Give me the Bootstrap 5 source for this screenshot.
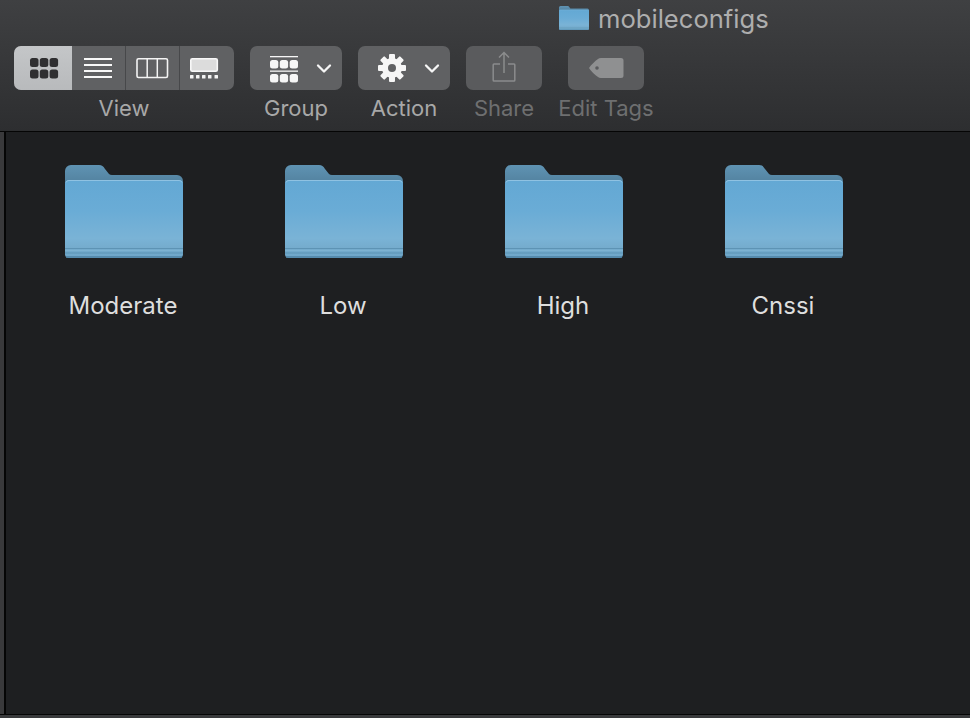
<!DOCTYPE html>
<html lang="en">
<head>
<meta charset="utf-8">
<title>mobileconfigs</title>
<link href="https://cdn.jsdelivr.net/npm/bootstrap@5.3.0/dist/css/bootstrap.min.css" rel="stylesheet">
<style>
html,body{margin:0;height:718px;overflow:hidden;background:#1e1f21;font-family:Inter,"Liberation Sans",sans-serif}
.finder-win{width:970px;height:718px}
.top-bar{height:132px;background:linear-gradient(#3f4042,#2d2e30);border-bottom:1px solid #050505;flex:none}
.title-line{height:46px;padding-left:559px;color:#aeaeae;font-size:25.6px;line-height:38px;gap:9px}
.title-ico{margin-top:6px;flex:none}
.tool-row{padding-left:14px}
.tool-item{flex:none;text-align:center;font-size:22px;line-height:26px;color:#a8a8a8;white-space:nowrap}
.tool-item.off{color:#6e6f70}
.tool-face{height:44px;background:#606163;border-radius:7px;margin:0 auto 5px;display:flex;overflow:hidden}
.off .tool-face{background:#5a5b5d}
.w-view{width:220px;margin-right:16px}
.w-drop{width:92px;margin-right:16px}
.w-share{width:76px;margin-right:26px}
.w-tags{width:76px}
.w-tags .tag-label{margin-left:-10px;margin-right:-10px;display:block}
.seg{display:block;flex:none;border-left:1px solid #47484a}
.seg-a{width:58px;border-left:0;background:linear-gradient(#c4c6c8,#b8babc)}
.seg-b{width:53px;border-left:0}
.seg-c{width:54px}
.seg-d{width:55px}
.body-wrap{flex:1 1 auto;min-height:0}
.edge{width:4px;background:#39393b;flex:none}
.edge-line{width:2px;background:#050505;flex:none}
.files{padding:33px 0 0 7px;flex:1 1 auto}
.file-cell{width:220px;flex:none;text-align:center;color:#dedede;font-size:24px;line-height:28px}
.file-cell svg{display:block;margin:0 auto 34px;transform:translateX(1px)}
.foot-line{height:4px;background:#3a3b3d;flex:none;border-top:1px solid #050505}
</style>
</head>
<body>
<svg width="0" height="0" class="d-block" aria-hidden="true">
  <defs>
    <linearGradient id="fb" x1="0" y1="0" x2="0" y2="1"><stop offset="0" stop-color="#5f93b3"/><stop offset="1" stop-color="#4d7a96"/></linearGradient>
    <linearGradient id="ff" x1="0" y1="0" x2="0" y2="1"><stop offset="0" stop-color="#63a8d4"/><stop offset=".4" stop-color="#6aacd6"/><stop offset=".75" stop-color="#7ab3d6"/><stop offset=".88" stop-color="#74abcc"/><stop offset="1" stop-color="#6ea6c9"/></linearGradient>
    <symbol id="folder" viewBox="0 0 118 93">
      <path d="M0 6a6 6 0 0 1 6-6h28c3 0 4 1 6 4l4 5q1 1 3 1h65a6 6 0 0 1 6 6v10H0z" fill="url(#fb)"/>
      <path d="M0 19a4 4 0 0 1 4-4h110a4 4 0 0 1 4 4v70a4 4 0 0 1-4 4H4a4 4 0 0 1-4-4z" fill="url(#ff)"/>
      <path d="M1 17.500a3 3 0 0 1 3-2h110a3 3 0 0 1 3 2" fill="none" stroke="#8fc2e2" stroke-width="1"/>
      <path d="M0 83.500h118M0 88h118" stroke="#5d93b4" stroke-width="1"/>
      <path d="M0 85.500h118" stroke="#82b6d4" stroke-width="1" opacity=".7"/>
      <path d="M1 92h116" stroke="#4f84a5" stroke-width="2" opacity=".8"/>
    </symbol>
  </defs>
</svg>
<div class="finder-win d-flex flex-column">
  <div class="top-bar">
    <div class="title-line d-flex align-items-start">
      <svg width="30" height="24" viewBox="0 0 118 93" class="title-ico" preserveAspectRatio="none"><use href="#folder"/></svg>
      <span>mobileconfigs</span>
    </div>
    <div class="tool-row d-flex align-items-start">
      <div class="tool-item w-view">
        <div class="tool-face">
          <svg class="seg seg-a" height="44" viewBox="14 46 58 44"><g fill="#2f2f31"><rect x="30" y="58" width="8.500" height="9" rx="2.500"/><rect x="39.800" y="58" width="8.500" height="9" rx="2.500"/><rect x="49.600" y="58" width="8.500" height="9" rx="2.500"/><rect x="30" y="69.500" width="8.500" height="9" rx="2.500"/><rect x="39.800" y="69.500" width="8.500" height="9" rx="2.500"/><rect x="49.600" y="69.500" width="8.500" height="9" rx="2.500"/></g></svg>
          <svg class="seg seg-b" height="44" viewBox="72 46 53 44"><path d="M84 59h28M84 65h28M84 71h28M84 77h28" stroke="#f8f8f8" stroke-width="2" fill="none"/></svg>
          <svg class="seg seg-c" height="44" viewBox="126 46 53 44"><rect x="137" y="58.800" width="30.500" height="18.700" rx="1.500" fill="none" stroke="#f4f4f4" stroke-width="1.600"/><path d="M147.200 59v18M157.300 59v18" stroke="#f4f4f4" stroke-width="1.500"/></svg>
          <svg class="seg seg-d" height="44" viewBox="180 46 54 44"><rect x="190.800" y="58.800" width="26.500" height="12.500" rx="1.500" fill="#dcdcdc" stroke="#f8f8f8" stroke-width="1.600"/><g fill="#f4f4f4"><rect x="190" y="75" width="3.500" height="3.500" rx=".6"/><rect x="196" y="75" width="3.500" height="3.500" rx=".6"/><rect x="202" y="75" width="3.500" height="3.500" rx=".6"/><rect x="208" y="75" width="3.500" height="3.500" rx=".6"/><rect x="214.500" y="75" width="3.500" height="3.500" rx=".6"/></g></svg>
        </div>
        View
      </div>
      <div class="tool-item w-drop">
        <div class="tool-face">
          <svg width="92" height="44" viewBox="250 46 92 44"><g fill="#f6f6f6"><rect x="270" y="56" width="28" height="1.300"/><rect x="270" y="70.500" width="28" height="1.300"/><rect x="270" y="60" width="8.300" height="8.500" rx="2.500"/><rect x="279.800" y="60" width="8.300" height="8.500" rx="2.500"/><rect x="289.700" y="60" width="8.300" height="8.500" rx="2.500"/><rect x="270" y="74" width="8.300" height="8.500" rx="2.500"/><rect x="279.800" y="74" width="8.300" height="8.500" rx="2.500"/><rect x="289.700" y="74" width="8.300" height="8.500" rx="2.500"/></g><path d="M318 65.500l6 6 6-6" fill="none" stroke="#f6f6f6" stroke-width="2.300" stroke-linecap="round" stroke-linejoin="round"/></svg>
        </div>
        Group
      </div>
      <div class="tool-item w-drop">
        <div class="tool-face">
          <svg width="92" height="44" viewBox="358 46 92 44"><g fill="#f6f6f6"><rect x="389" y="54" width="6" height="28" rx="1"/><rect x="389" y="54" width="6" height="28" rx="1" transform="rotate(45 392 68)"/><rect x="389" y="54" width="6" height="28" rx="1" transform="rotate(90 392 68)"/><rect x="389" y="54" width="6" height="28" rx="1" transform="rotate(135 392 68)"/><circle cx="392" cy="68" r="10"/></g><circle cx="392" cy="68" r="4" fill="#606163"/><path d="M426 65.500l6 6 6-6" fill="none" stroke="#f6f6f6" stroke-width="2.300" stroke-linecap="round" stroke-linejoin="round"/></svg>
        </div>
        Action
      </div>
      <div class="tool-item w-share off">
        <div class="tool-face">
          <svg width="76" height="44" viewBox="465 46 76 44"><path d="M499 64h-6a.8.8 0 0 0-.8.8v15.400a.8.8 0 0 0 .8.800h20a.8.8 0 0 0 .8-.800V64.800a.8.8 0 0 0-.8-.8h-6M503 73V53M498 57.500l5-5 5 5" fill="none" stroke="#8b8c8d" stroke-width="1.500"/></svg>
        </div>
        Share
      </div>
      <div class="tool-item w-tags off">
        <div class="tool-face">
          <svg width="76" height="44" viewBox="568 46 76 44"><path d="M589 68c2-3 6-7 9-9q1-1 3-1h20a2.500 2.500 0 0 1 2.500 2.500v15a2.500 2.500 0 0 1-2.500 2.500h-20q-2 0-3-1c-3-2-7-6-9-9z" fill="#8f9091"/><circle cx="597" cy="68" r="1.800" fill="#5a5b5d"/></svg>
        </div>
        <span class="tag-label">Edit Tags</span>
      </div>
    </div>
  </div>
  <div class="body-wrap d-flex">
    <div class="edge"></div>
    <div class="edge-line"></div>
    <div class="files d-flex align-items-start">
      <div class="file-cell"><svg width="118" height="93"><use href="#folder"/></svg>Moderate</div>
      <div class="file-cell"><svg width="118" height="93"><use href="#folder"/></svg>Low</div>
      <div class="file-cell"><svg width="118" height="93"><use href="#folder"/></svg>High</div>
      <div class="file-cell"><svg width="118" height="93"><use href="#folder"/></svg>Cnssi</div>
    </div>
  </div>
  <div class="foot-line"></div>
</div>
<script src="https://cdn.jsdelivr.net/npm/bootstrap@5.3.0/dist/js/bootstrap.bundle.min.js"></script>
</body>
</html>
